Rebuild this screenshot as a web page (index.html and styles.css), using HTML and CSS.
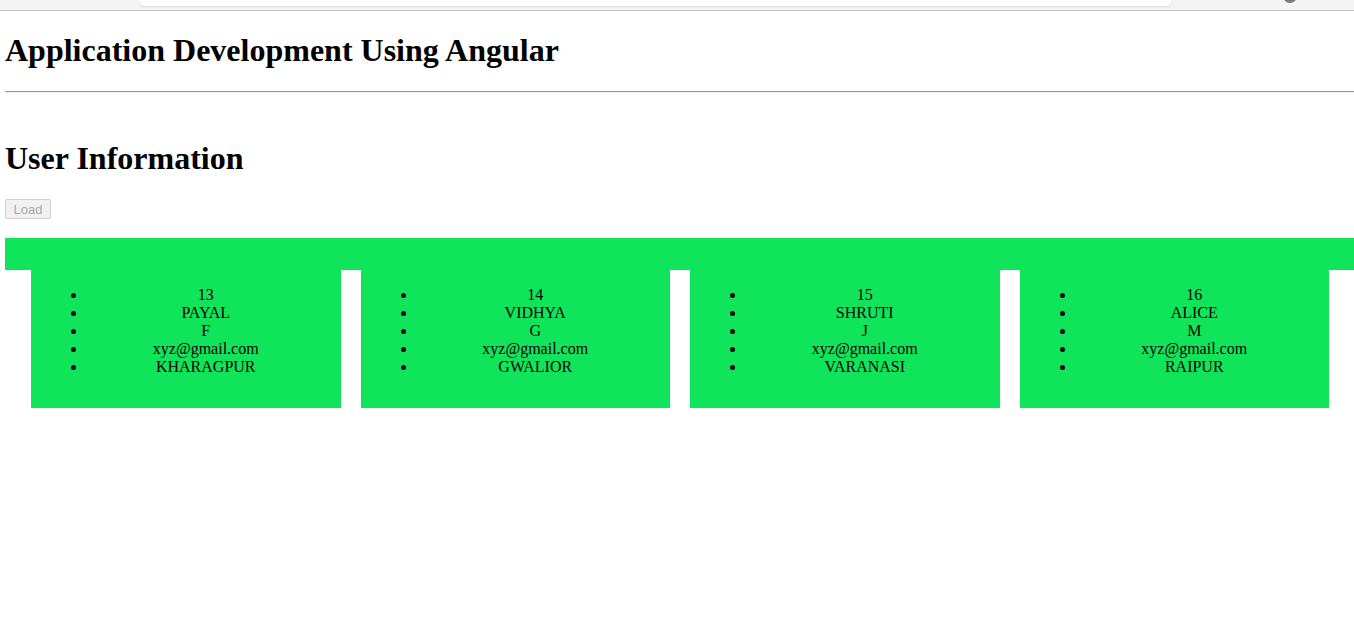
FILE: index.html
```html
<!DOCTYPE html>
<html lang="en">
<head>
<meta charset="utf-8">
<title>Application Development Using Angular</title>
<link rel="stylesheet" href="styles.css">
</head>
<body>
<div class="chrome">
  <div class="address"></div>
  <div class="chrome-spacer"></div>
  <div class="avatar"></div>
</div>
<main class="page">
  <h1 class="title">Application Development Using Angular</h1>
  <hr class="rule">
  <h1 class="section">User Information</h1>
  <button class="load" disabled>Load</button>
  <div class="band"></div>
  <div class="cards">
    <div class="card">
      <ul class="fields">
        <li>13</li>
        <li>PAYAL</li>
        <li>F</li>
        <li>xyz@gmail.com</li>
        <li>KHARAGPUR</li>
      </ul>
    </div>
    <div class="card">
      <ul class="fields">
        <li>14</li>
        <li>VIDHYA</li>
        <li>G</li>
        <li>xyz@gmail.com</li>
        <li>GWALIOR</li>
      </ul>
    </div>
    <div class="card">
      <ul class="fields">
        <li>15</li>
        <li>SHRUTI</li>
        <li>J</li>
        <li>xyz@gmail.com</li>
        <li>VARANASI</li>
      </ul>
    </div>
    <div class="card">
      <ul class="fields">
        <li>16</li>
        <li>ALICE</li>
        <li>M</li>
        <li>xyz@gmail.com</li>
        <li>RAIPUR</li>
      </ul>
    </div>
  </div>
</main>
</body>
</html>
```

FILE: styles.css
```css
html, body {
  margin: 0;
  padding: 0;
  background: #ffffff;
}

body {
  font-family: "Liberation Serif", "Times New Roman", serif;
  font-size: 16px;
  color: #000000;
}

.chrome {
  height: 10px;
  background: #f4f4f4;
  border-bottom: 1px solid #c2c2c2;
  display: flex;
  align-items: flex-start;
  padding-left: 140px;
  overflow: hidden;
}

.address {
  width: 1031px;
  height: 6px;
  background: #ffffff;
  border-radius: 0 0 4px 4px;
  box-shadow: 0 1px 2px rgba(0, 0, 0, 0.12);
}

.chrome-spacer {
  width: 112px;
}

.avatar {
  width: 14px;
  height: 14px;
  margin-top: -11px;
  border-radius: 50%;
  background: #7a7a7a;
}

.page {
  padding-left: 5px;
}

.title {
  font-size: 32px;
  font-weight: bold;
  line-height: 37px;
  margin: 21px 0 22px;
}

.rule {
  margin: 0;
  border: 0;
  border-top: 1px solid #9a9a9a;
  border-bottom: 1px solid #eeeeee;
  height: 0;
}

.section {
  font-size: 32px;
  font-weight: bold;
  line-height: 37px;
  margin: 47px 0 22px;
}

.load {
  display: block;
  box-sizing: border-box;
  width: 46px;
  height: 20px;
  padding: 0;
  margin: 0 0 19px;
  font-family: "Liberation Sans", Arial, sans-serif;
  font-size: 13px;
  color: #a8a8a8;
  background: #f1f1f1;
  border: 1px solid #cfcfcf;
  border-radius: 2px;
  text-align: center;
}

.band {
  height: 32px;
  background: #0fe45b;
}

.cards {
  display: flex;
  gap: 20px;
  padding: 0 25px 0 26px;
}

.card {
  flex: 1;
  height: 138px;
  background: #0fe45b;
  padding: 0 16px;
}

.fields {
  margin: 16px 0;
  padding-left: 40px;
  list-style: disc;
  text-align: center;
}

.fields li {
  line-height: 18px;
}
```
